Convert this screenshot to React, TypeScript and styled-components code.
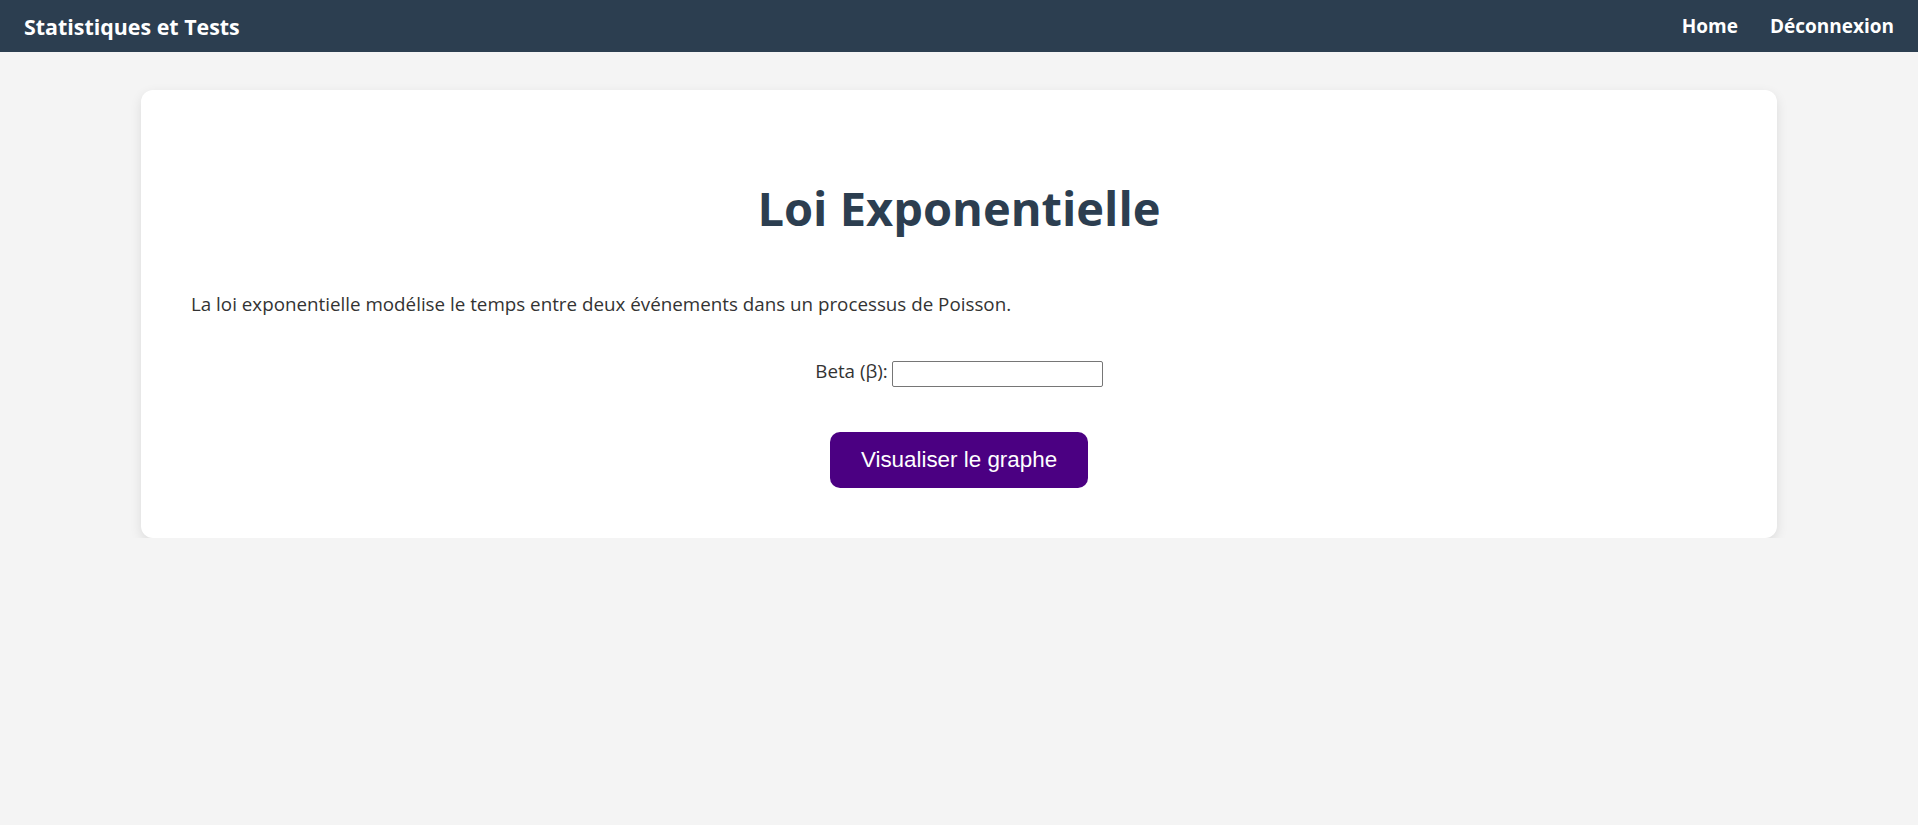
import React from "react";
import styled, { createGlobalStyle } from "styled-components";

const GlobalStyle = createGlobalStyle`
  html, body {
    margin: 0;
    padding: 0;
    background: #f4f4f4;
    font-family: "Open Sans", "Noto Sans", sans-serif;
  }
  * { box-sizing: border-box; }
`;

const Navbar = styled.nav`
  height: 52px;
  background: #2c3e50;
  display: flex;
  align-items: center;
  justify-content: space-between;
  padding: 0 24px;
`;

const Brand = styled.a`
  color: #ffffff;
  font-weight: 700;
  font-size: 21.4px;
  text-decoration: none;
`;

const NavLinks = styled.div`
  display: flex;
  align-items: center;
  gap: 32px;
`;

const NavLink = styled.a`
  color: #ffffff;
  font-weight: 700;
  font-size: 19px;
  text-decoration: none;
`;

const Main = styled.main`
  padding-top: 38px;
`;

const Card = styled.section`
  width: 1636px;
  margin: 0 auto;
  background: #ffffff;
  border-radius: 12px;
  box-shadow: 0 4px 12px rgba(0, 0, 0, 0.1);
  padding: 50px 50px 50px;
  display: flex;
  flex-direction: column;
`;

const Title = styled.h1`
  margin: 40px 0 0;
  text-align: center;
  color: #2c3e50;
  font-size: 47px;
  line-height: 1.2;
  font-weight: 700;
`;

const Description = styled.p`
  margin: 55px 0 0;
  color: #333333;
  font-size: 18.8px;
  line-height: 1.4;
`;

const FieldRow = styled.div`
  margin-top: 40px;
  display: flex;
  justify-content: center;
  align-items: flex-start;
  gap: 4px;
`;

const Label = styled.label`
  color: #333333;
  font-size: 18.8px;
  line-height: 1.4;
`;

const Input = styled.input`
  width: 211px;
  height: 26px;
  margin-top: 3px;
  border: 1px solid #767676;
  border-radius: 2px;
  padding: 1px 2px;
  font-family: "Liberation Sans", Arial, sans-serif;
  font-size: 16px;
  background: #ffffff;
`;

const ButtonRow = styled.div`
  margin-top: 45px;
  display: flex;
  justify-content: center;
`;

const Button = styled.button`
  background: #4b0082;
  color: #ffffff;
  border: none;
  border-radius: 10px;
  padding: 15px 31px;
  font-family: "Liberation Sans", Arial, sans-serif;
  font-size: 22.4px;
  line-height: 26px;
  cursor: pointer;
`;

export default function App() {
  return (
    <>
      <GlobalStyle />
      <Navbar>
        <Brand href="#">Statistiques et Tests</Brand>
        <NavLinks>
          <NavLink href="#">Home</NavLink>
          <NavLink href="#">Déconnexion</NavLink>
        </NavLinks>
      </Navbar>
      <Main>
        <Card>
          <Title>Loi Exponentielle</Title>
          <Description>
            La loi exponentielle modélise le temps entre deux événements dans un processus de Poisson.
          </Description>
          <FieldRow>
            <Label htmlFor="beta">Beta (β):</Label>
            <Input id="beta" type="text" />
          </FieldRow>
          <ButtonRow>
            <Button type="button">Visualiser le graphe</Button>
          </ButtonRow>
        </Card>
      </Main>
    </>
  );
}
